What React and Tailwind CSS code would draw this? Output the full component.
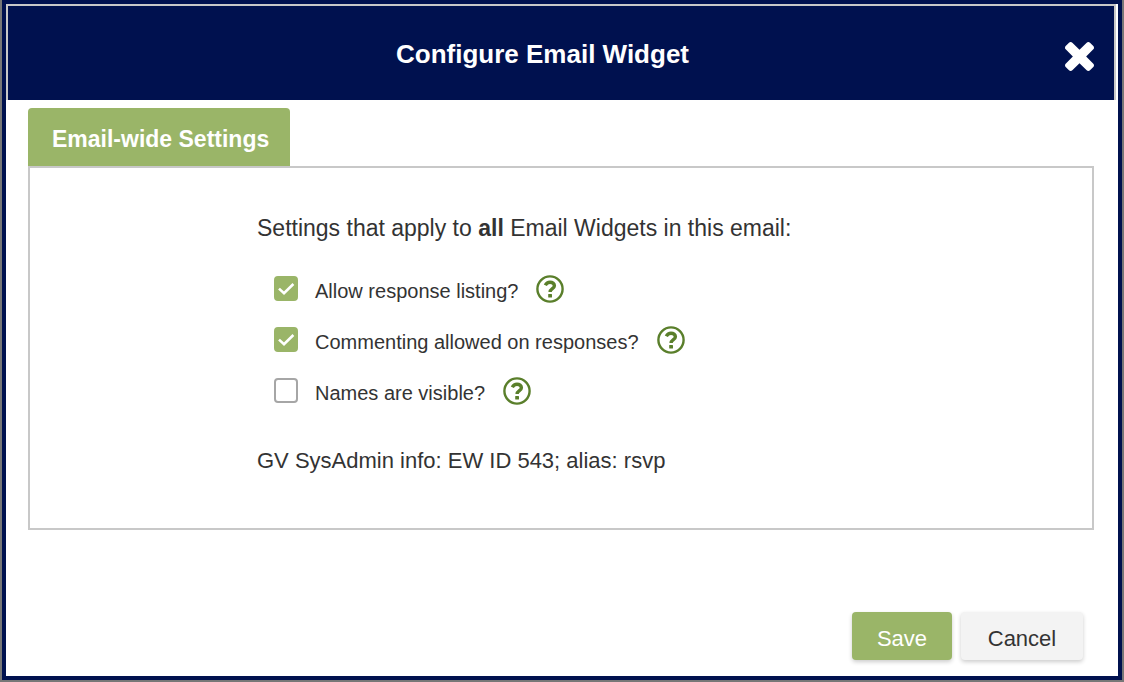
import { useState } from "react";

function CloseIcon() {
  return (
    <svg viewBox="302 366 1188 1188" className="size-[29px] fill-current" aria-hidden="true">
      <path d="M1490 1322q0 40-28 68l-136 136q-28 28-68 28t-68-28l-294-294-294 294q-28 28-68 28t-68-28l-136-136q-28-28-28-68t28-68l294-294-294-294q-28-28-28-68t28-68l136-136q28-28 68-28t68 28l294 294 294-294q28-28 68-28t68 28l136 136q28 28 28 68t-28 68l-294 294 294 294q28 28 28 68z" />
    </svg>
  );
}

function HelpIcon() {
  return (
    <svg viewBox="0 0 28 28" className="size-7" fill="none" stroke="currentColor" aria-hidden="true">
      <circle cx="14" cy="14" r="12.6" strokeWidth="2.4" />
      <path d="M9.3 10.2C10.3 8.3 11.8 7.2 14 7.2c2.5 0 4.4 1.4 4.4 3.5 0 3-4.3 2.9-4.3 6.4" strokeWidth="3.4" />
      <rect x="12.2" y="18.9" width="3.8" height="3.7" rx="0.5" fill="currentColor" stroke="none" />
    </svg>
  );
}

function Setting({ id, label, initial }) {
  const [checked, setChecked] = useState(initial);
  return (
    <div className="flex h-[51px] items-center">
      <span className="grid h-[25px] w-6 shrink-0">
        <input
          id={id}
          type="checkbox"
          checked={checked}
          onChange={(e) => setChecked(e.target.checked)}
          className="peer col-start-1 row-start-1 appearance-none rounded border-2 border-[#a6a6a6] bg-white checked:border-[#9ab568] checked:bg-[#9ab568]"
        />
        <svg
          viewBox="0 0 24 25"
          className="pointer-events-none invisible col-start-1 row-start-1 h-[25px] w-6 peer-checked:visible"
          fill="none"
          stroke="white"
          strokeWidth="2.6"
          aria-hidden="true"
        >
          <path d="M5 12.6l5 4.6L19.4 8" />
        </svg>
      </span>
      <label htmlFor={id} className="pt-1 pl-[17px] text-[20px] leading-6">
        {label}
      </label>
      <button type="button" aria-label={"Help: " + label} className="ml-[18px] text-[#5a7f2b]">
        <HelpIcon />
      </button>
    </div>
  );
}

export default function App() {
  return (
    <div className="flex min-h-screen bg-[#777] px-0.5 pb-0.5 font-['Liberation_Sans',Arial,sans-serif] text-[#333]">
      <div
        role="dialog"
        aria-labelledby="dialog-title"
        className="flex flex-1 flex-col border-4 border-[#00114f] bg-white"
      >
        <header className="mr-0.5 flex h-24 items-center border-2 border-b-0 border-[#c8c8c8] bg-[#00114f] pr-5 pl-3 text-white">
          <h1 id="dialog-title" className="flex-1 pt-0.5 text-center text-[26px] leading-8 font-bold">
            Configure Email Widget
          </h1>
          <button type="button" aria-label="Close" className="pt-1.5">
            <CloseIcon />
          </button>
        </header>

        <main className="pt-2 pr-6 pl-[22px]">
          <div role="tablist" className="flex">
            <button
              type="button"
              role="tab"
              aria-selected="true"
              className="h-[58px] rounded-t bg-[#9ab568] pt-1 pr-[21px] pl-6 text-[23px] font-bold text-white"
            >
              Email-wide Settings
            </button>
          </div>
          <section role="tabpanel" className="border-2 border-[#c8c8c8] pt-[46px] pb-[53px] pl-[227px]">
            <p className="text-[23px] leading-7">
              Settings that apply to <b>all</b> Email Widgets in this email:
            </p>
            <div className="mt-[21px] pl-[17px]">
              <Setting id="listing" label="Allow response listing?" initial={true} />
              <Setting id="commenting" label="Commenting allowed on responses?" initial={true} />
              <Setting id="names" label="Names are visible?" initial={false} />
            </div>
            <p className="mt-[31px] text-[22px] leading-7">GV SysAdmin info: EW ID 543; alias: rsvp</p>
          </section>
        </main>

        <footer className="mt-auto flex justify-end gap-[9px] pt-6 pr-[35px] pb-4">
          <button
            type="button"
            className="h-12 min-w-[100px] rounded bg-[#9ab568] px-6 pt-1 text-[22px] text-white shadow-[0_2px_4px_rgba(0,0,0,0.2)]"
          >
            Save
          </button>
          <button
            type="button"
            className="h-12 min-w-[122px] rounded bg-[#f3f3f3] px-6 pt-1 text-[22px] shadow-[0_2px_4px_rgba(0,0,0,0.2)]"
          >
            Cancel
          </button>
        </footer>
      </div>
    </div>
  );
}
